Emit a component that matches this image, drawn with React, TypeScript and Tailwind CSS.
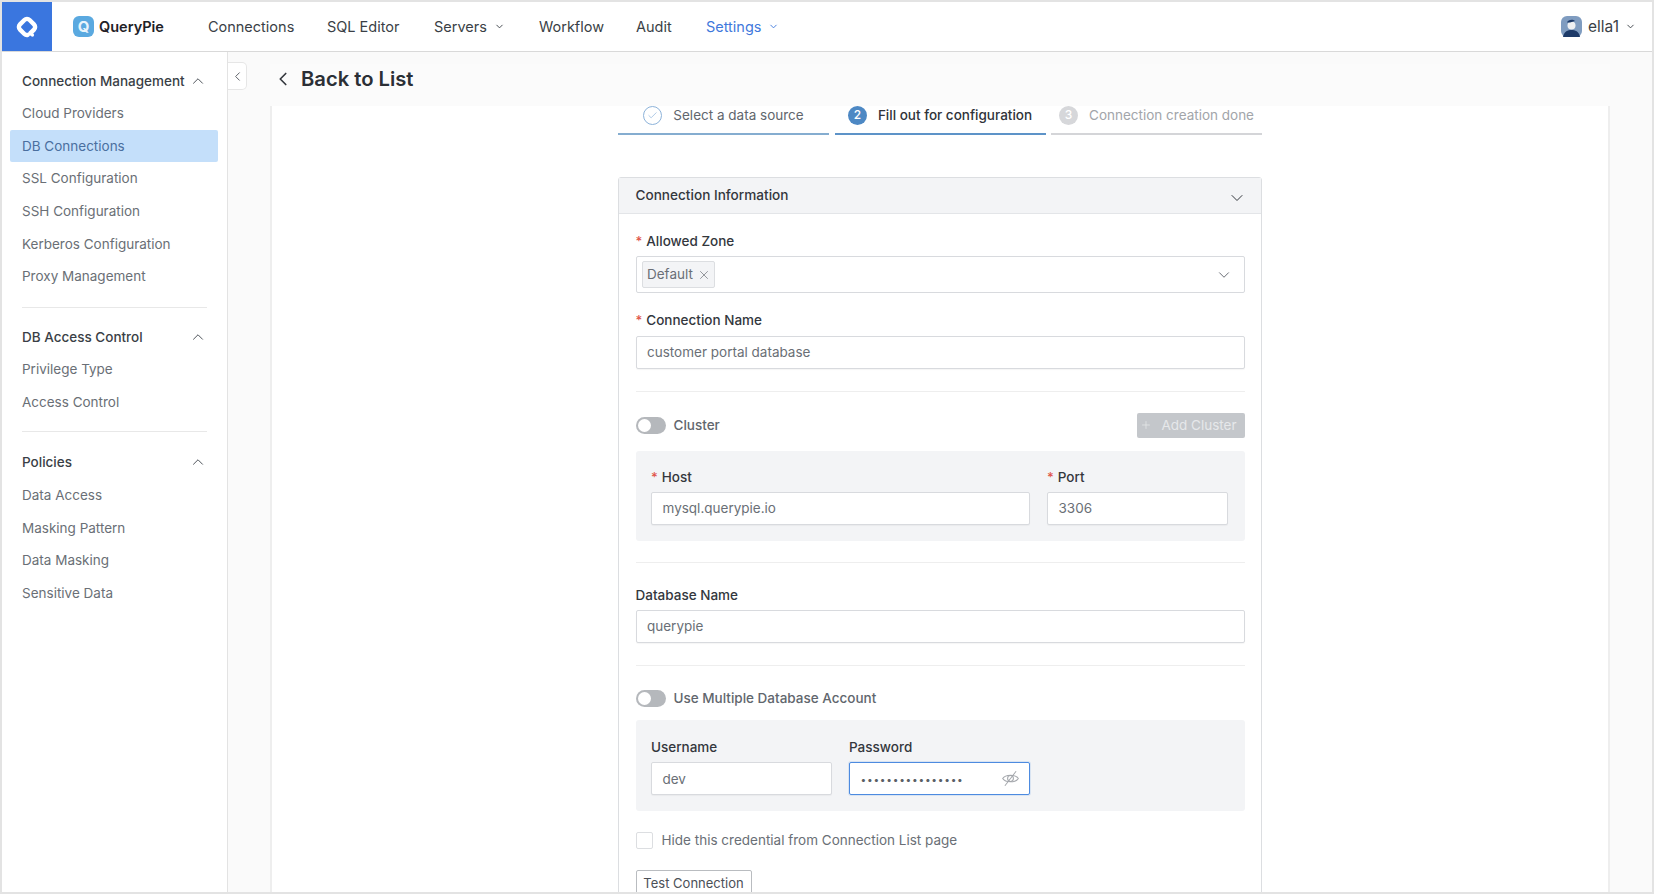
import React from "react";
import { ChevronDown, ChevronUp, ChevronLeft, Check, X, Plus } from "lucide-react";

const font = { fontFamily: "Inter, 'Noto Sans', sans-serif" };

function Logo() {
  return (
    <svg width="24" height="24" viewBox="0 0 24 24" fill="none">
      <path d="M15.2 18.4 L19 14.6 a3.6 3.6 0 0 0 0 -5.2 L14.6 5 a3.6 3.6 0 0 0 -5.2 0 L5 9.4 a3.6 3.6 0 0 0 0 5.2 L9.4 19 a3.6 3.6 0 0 0 3 1" stroke="white" strokeWidth="4.4" strokeLinecap="round" />
      <circle cx="17.4" cy="20" r="1.7" fill="white" />
    </svg>
  );
}

function QIcon() {
  return (
    <div className="w-[21px] h-[21px] rounded-[6px] bg-[#5aa9e0] flex items-center justify-center text-[#e8f4fc] text-[15px] font-bold leading-none">Q</div>
  );
}

function Avatar() {
  return (
    <svg width="21" height="21" viewBox="0 0 21 21">
      <rect width="21" height="21" rx="6" fill="#7f9cc0" />
      <path d="M2 21 C3 15 7 14 10.5 14 C14 14 18 15 19 21 Z" fill="#1d3a68" />
      <circle cx="10.5" cy="9.5" r="4" fill="#eef0f2" />
      <path d="M6 6.5 C7 3.5 12 3 14 5 L9 6.5 Z" fill="#1d3a68" />
    </svg>
  );
}

function EyeSlash() {
  return (
    <svg width="19" height="19" viewBox="0 0 17 17" fill="none" stroke="#a3a6ab" strokeWidth="0.9">
      <path d="M1.5 8.5 C4 4.5 13 4.5 15.5 8.5 C13 12.5 4 12.5 1.5 8.5 Z" />
      <circle cx="8.5" cy="8.5" r="2.6" />
      <path d="M13.5 2 L3.5 15" />
    </svg>
  );
}

function SideGroup({ title, items, active, headerClass }: { title: string; items: string[]; active?: string; headerClass: string }) {
  return (
    <div className="flex flex-col">
      <div className={"pl-[20px] pr-[20px] flex items-center justify-between text-[13.5px] font-medium text-[#3a3f46] " + headerClass}>
        <span>{title}</span>
        <ChevronUp size={18} strokeWidth={1.3} className="text-[#4b5057]" />
      </div>
      {items.map((i) => (
        <div
          key={i}
          className={
            "h-[32.6px] flex items-center text-[13.5px] ml-[8px] mr-[9px] pl-[12px] rounded-[2px] " +
            (i === active ? "bg-[#c4dffa] text-[#4a6f9f]" : "text-[#6a6f76]")
          }
        >
          {i}
        </div>
      ))}
    </div>
  );
}

function Req() {
  return <span className="text-[#e0554a] mr-[4px] text-[13px] leading-none">*</span>;
}

function Label({ children, req }: { children: React.ReactNode; req?: boolean }) {
  return (
    <div className="h-[20px] flex items-center text-[13.5px] font-medium text-[#33373d]">
      {req && <Req />}
      {children}
    </div>
  );
}

function Input({ value, className }: { value: string; className?: string }) {
  return (
    <div className={"h-[33px] bg-white border border-[#d8dade] rounded-[2px] flex items-center pl-[10.5px] text-[13.5px] text-[#6a6f76] shadow-[0_1px_1px_rgba(0,0,0,0.04)] " + (className ?? "")}>
      {value}
    </div>
  );
}

function Toggle() {
  return (
    <div className="w-[30px] h-[17px] rounded-full bg-[#b5b8bc] flex items-center pl-[2px] mt-[1px]">
      <div className="w-[13px] h-[13px] rounded-full bg-white" />
    </div>
  );
}

function Step({ icon, text, lineClass, textClass, last }: { icon: React.ReactNode; text: string; lineClass: string; textClass: string; last?: boolean }) {
  return (
    <div className={"w-[211px] h-[29px] flex items-center justify-center gap-[11px] border-b-2 pb-[9px] whitespace-nowrap " + lineClass + (last ? "" : " mr-[5.5px]")}>
      {icon}
      <span className={"text-[13.5px] " + textClass}>{text}</span>
    </div>
  );
}

export default function App() {
  return (
    <div style={font} className="w-[1654px] h-[894px] overflow-hidden border-2 border-[#e3e3e3] bg-white flex flex-col">
      <header className="h-[50px] shrink-0 flex items-center border-b border-[#d9d9d9] bg-white">
        <div className="w-[50px] h-full bg-[#3a76df] flex items-center justify-center shrink-0">
          <Logo />
        </div>
        <div className="ml-[21px] flex items-center gap-[5px]">
          <QIcon />
          <span className="text-[14.5px] font-semibold text-[#1f2227]">QueryPie</span>
        </div>
        <nav className="ml-[44px] flex items-center text-[14.5px] text-[#3a3f46]">
          <span className="w-[119px]">Connections</span>
          <span className="w-[107px]">SQL Editor</span>
          <span className="w-[105px] flex items-center gap-[7px]">Servers <ChevronDown size={11} strokeWidth={2} /></span>
          <span className="w-[97px]">Workflow</span>
          <span className="w-[70px]">Audit</span>
          <span className="flex items-center gap-[7px] text-[#3f79dc]">Settings <ChevronDown size={11} strokeWidth={2} /></span>
        </nav>
        <div className="ml-auto mr-[16px] flex items-center gap-[6px]">
          <Avatar />
          <span className="text-[15.5px] text-[#3a3f46]">ella1</span>
          <ChevronDown size={11} strokeWidth={2} className="text-[#3a3f46]" />
        </div>
      </header>
      <div className="flex-1 flex min-h-0">
        <aside className="w-[226px] shrink-0 border-r border-[#e3e3e3] bg-white pt-[13px] flex flex-col">
          <SideGroup title="Connection Management" headerClass="h-[32px]" items={["Cloud Providers", "DB Connections", "SSL Configuration", "SSH Configuration", "Kerberos Configuration", "Proxy Management"]} active="DB Connections" />
          <div className="mx-[20px] mt-[14px] mb-[13px] h-px bg-[#e8e8e8]" />
          <SideGroup title="DB Access Control" headerClass="h-[32.5px]" items={["Privilege Type", "Access Control"]} />
          <div className="mx-[20px] mt-[13px] mb-[13px] h-px bg-[#e8e8e8]" />
          <SideGroup title="Policies" headerClass="h-[33.5px]" items={["Data Access", "Masking Pattern", "Data Masking", "Sensitive Data"]} />
        </aside>
        <main className="flex-1 relative bg-[#fafafa] pl-[42px] pr-[42px] pt-[12px] min-w-0">
          <div className="absolute left-0 top-[10px] w-[19px] h-[28px] bg-white border border-l-0 border-[#e6e6e6] rounded-r-[5px] flex items-center justify-center">
            <ChevronLeft size={15} strokeWidth={1.5} className="text-[#555a60]" />
          </div>
          <div className="h-full flex flex-col">
            <div className="h-[42px] shrink-0 flex items-center pl-[2px] pb-[12px] gap-[7px] bg-[#fbfbfb]">
              <ChevronLeft size={22} strokeWidth={1.8} className="text-[#33373d]" />
              <span className="text-[20.2px] font-semibold text-[#2b2f35]">Back to List</span>
            </div>
            <div className="flex-1 bg-white border-l-2 border-r-2 border-[#eeeeee] flex flex-col items-center">
              <div className="flex">
                <Step
                  lineClass="border-[#85add0]"
                  textClass="text-[#61666d]"
                  text="Select a data source"
                  icon={
                    <div className="w-[19px] h-[19px] rounded-full border border-[#8db3da] flex items-center justify-center">
                      <Check size={11} strokeWidth={1.5} className="text-[#8db3da]" />
                    </div>
                  }
                />
                <Step
                  lineClass="border-[#5d93c8]"
                  textClass="text-[#2f3339] font-medium"
                  text="Fill out for configuration"
                  icon={<div className="w-[19px] h-[19px] rounded-full bg-[#4d88c4] text-white text-[12px] font-medium flex items-center justify-center">2</div>}
                />
                <Step
                  last
                  lineClass="border-[#d4d5d8]"
                  textClass="text-[#a2a5aa]"
                  text="Connection creation done"
                  icon={<div className="w-[19px] h-[19px] rounded-full bg-[#d6d7da] text-white text-[12px] font-medium flex items-center justify-center">3</div>}
                />
              </div>
              <div className="w-[644px] mt-[42px] border border-[#dcdee1] rounded-t-[3px] flex flex-col">
                <div className="h-[36px] bg-[#f3f4f6] border-b border-[#e3e5e8] flex items-center justify-between pl-[16.5px] pr-[14px]">
                  <span className="text-[13.6px] font-medium text-[#33373d]">Connection Information</span>
                  <ChevronDown size={20} strokeWidth={1.2} className="text-[#33373d] mt-[4px]" />
                </div>
                <div className="px-[16.5px] pt-[17px] flex flex-col">
                  <Label req>Allowed Zone</Label>
                  <div className="mt-[5px] h-[37px] border border-[#d8dade] rounded-[2px] flex items-center justify-between pl-[5px] pr-[11px]">
                    <div className="h-[27px] w-[73px] bg-[#f3f4f6] border border-[#dcdee1] rounded-[2px] flex items-center pl-[4.5px] gap-[4px] text-[13.5px] text-[#6a6f76]">
                      Default <X size={14} strokeWidth={1.2} />
                    </div>
                    <ChevronDown size={18} strokeWidth={1.2} className="text-[#5a5f66]" />
                  </div>
                  <div className="mt-[17px]"><Label req>Connection Name</Label></div>
                  <Input className="mt-[6px]" value="customer portal database" />
                  <div className="mt-[22px] h-px bg-[#eeeeee]" />
                  <div className="mt-[20px] h-[26px] flex items-center justify-between">
                    <div className="flex items-center gap-[8px]">
                      <Toggle />
                      <span className="text-[13.5px] font-medium text-[#61666d]">Cluster</span>
                    </div>
                    <div className="w-[108px] h-[25px] bg-[#c4c7cb] rounded-[2px] flex items-center justify-center gap-[9px] pr-[4px] text-[13.5px] text-[#e6e8ea]">
                      <Plus size={12} strokeWidth={1.5} /> Add Cluster
                    </div>
                  </div>
                  <div className="mt-[13px] h-[90px] bg-[#f3f4f6] rounded-[3px] px-[15.5px] pt-[16px] flex gap-[17px]">
                    <div className="w-[379px]">
                      <Label req>Host</Label>
                      <Input className="mt-[5px]" value="mysql.querypie.io" />
                    </div>
                    <div className="w-[181px]">
                      <Label req>Port</Label>
                      <Input className="mt-[5px]" value="3306" />
                    </div>
                  </div>
                  <div className="mt-[21px] h-px bg-[#eeeeee]" />
                  <div className="mt-[22px]"><Label>Database Name</Label></div>
                  <Input className="mt-[5px]" value="querypie" />
                  <div className="mt-[22px] h-px bg-[#eeeeee]" />
                  <div className="mt-[22px] flex items-center gap-[8px]">
                    <Toggle />
                    <span className="text-[13.5px] font-medium text-[#61666d]">Use Multiple Database Account</span>
                  </div>
                  <div className="mt-[12px] h-[91px] bg-[#f3f4f6] rounded-[3px] px-[15.5px] pt-[17px] flex gap-[17px]">
                    <div className="w-[181px]">
                      <Label>Username</Label>
                      <Input className="mt-[5px]" value="dev" />
                    </div>
                    <div className="w-[181px]">
                      <Label>Password</Label>
                      <div className="mt-[5px] h-[33px] bg-white border border-[#4d8be0] rounded-[2px] flex items-center justify-between pl-[11px] pr-[9px] text-[#5a5f66] shadow-[0_0_0_1px_rgba(77,139,224,0.15)]">
                        <span className="text-[10px] tracking-[1.7px] font-bold leading-none">••••••••••••••••</span>
                        <EyeSlash />
                      </div>
                    </div>
                  </div>
                  <div className="mt-[19px] flex items-center gap-[9px]">
                    <div className="w-[17px] h-[17px] border border-[#dcdee1] rounded-[2px] bg-white" />
                    <span className="text-[13.5px] text-[#6a6f76]">Hide this credential from Connection List page</span>
                  </div>
                  <div className="mt-[19px] w-[116px] h-[28px] border border-[#b9bcc0] rounded-t-[2px] flex justify-center pt-[6px] leading-none text-[13px] text-[#4b5057] bg-white">
                    Test Connection
                  </div>
                </div>
              </div>
            </div>
          </div>
        </main>
      </div>
    </div>
  );
}
